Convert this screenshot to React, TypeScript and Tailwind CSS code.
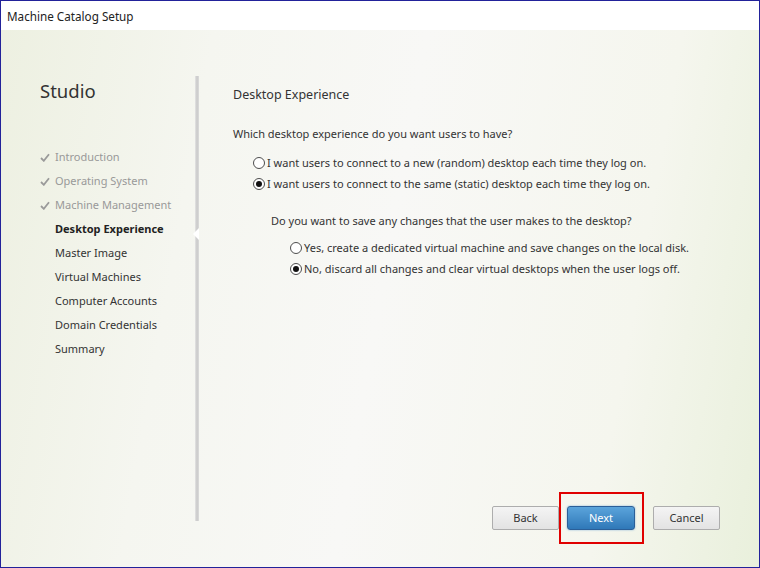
import React from "react";

const steps = [
    {label: "Introduction", done: true},
    {label: "Operating System", done: true},
    {label: "Machine Management", done: true},
    {label: "Desktop Experience", current: true},
    {label: "Master Image"},
    {label: "Virtual Machines"},
    {label: "Computer Accounts"},
    {label: "Domain Credentials"},
    {label: "Summary"},
];

const Radio = ({checked, label}: { checked?: boolean; label: string }) => (
    <div className="flex items-center h-[21px]">
        <span className="w-[12px] h-[12px] rounded-full border border-[#4d4d4d] bg-white flex items-center justify-center mr-[2px]">
            {checked && <span className="w-[6px] h-[6px] rounded-full bg-[#111]"/>}
        </span>
        <span>{label}</span>
    </div>
);

export default function App() {
    return (
        <div className="w-[760px] h-[568px] border border-[#22229a] flex flex-col text-[11px] leading-[16px] text-[#333] font-['Noto_Sans','Open_Sans',sans-serif] overflow-hidden">
            {/* title bar */}
            <div className="h-[29px] bg-white flex items-center pl-[6px] text-[11.7px] text-[#222] shrink-0">
                Machine Catalog Setup
            </div>

            {/* body */}
            <div className="flex-1 flex bg-[linear-gradient(100deg,#edf0e1_0%,#f5f6f0_25%,#f8f8f6_50%,#f5f6ee_80%,#e9f0dc_100%)]">
                {/* left nav */}
                <div className="w-[194px] shrink-0 pt-[48px] pl-[39px]">
                    <div className="text-[18.5px] text-[#333] leading-[26px]">Studio</div>
                    <div className="mt-[41px] flex flex-col">
                        {steps.map((s) => (
                            <div key={s.label} className="h-[24px] flex items-center">
                                <span className="w-[15px] flex items-center">
                                    {s.done && (
                                        <svg width="10" height="9" viewBox="0 0 10 9">
                                            <path d="M1 5 L3.8 7.8 L9 1.2" fill="none" stroke="#9a9a9a" strokeWidth="1.8"/>
                                        </svg>
                                    )}
                                </span>
                                <span className={s.done ? "text-[#999]" : s.current ? "font-bold text-[#222]" : "text-[#333]"}>
                                    {s.label}
                                </span>
                            </div>
                        ))}
                    </div>
                </div>

                {/* divider */}
                <div className="relative w-[4px] mt-[46px] mb-[46px] bg-[linear-gradient(to_right,#e4e4e4,#c9c9c9,#dcdcdc)]">
                    <span className="absolute top-[152px] right-0 w-0 h-0 border-y-[6px] border-y-transparent border-r-[6px] border-r-white"/>
                </div>

                {/* content */}
                <div className="flex-1 flex flex-col pl-[34px] pt-[55px] pb-[23px]">
                    <div className="text-[12.5px] text-[#333] leading-[20px]">Desktop Experience</div>
                    <div className="mt-[21px]">Which desktop experience do you want users to have?</div>
                    <div className="mt-[10px] pl-[20px]">
                        <Radio label="I want users to connect to a new (random) desktop each time they log on."/>
                        <Radio checked label="I want users to connect to the same (static) desktop each time they log on."/>
                    </div>
                    <div className="mt-[19px] pl-[38px]">Do you want to save any changes that the user makes to the desktop?</div>
                    <div className="mt-[8px] pl-[57px]">
                        <Radio label="Yes, create a dedicated virtual machine and save changes on the local disk."/>
                        <Radio checked label="No, discard all changes and clear virtual desktops when the user logs off."/>
                    </div>

                    <div className="mt-auto flex items-center pl-[259px]">
                        <button className="w-[67px] h-[24px] border border-[#adadad] rounded-[2px] bg-[linear-gradient(#f4f4f4,#e3e3e3)] text-[#333]">
                            Back
                        </button>
                        <div className="border-2 border-[#e00000] pl-[6px] pr-[7px] py-[12px]">
                            <button className="w-[68px] h-[24px] border border-[#2b5f98] rounded-[3px] bg-[linear-gradient(#5ba4db,#2f78b8)] text-white shadow-[0_0_2px_#7fb0d8]">
                                Next
                            </button>
                        </div>
                        <button className="ml-[9px] w-[67px] h-[24px] border border-[#adadad] rounded-[2px] bg-[linear-gradient(#f4f4f4,#e3e3e3)] text-[#333]">
                            Cancel
                        </button>
                    </div>
                </div>
            </div>
        </div>
    );
}
